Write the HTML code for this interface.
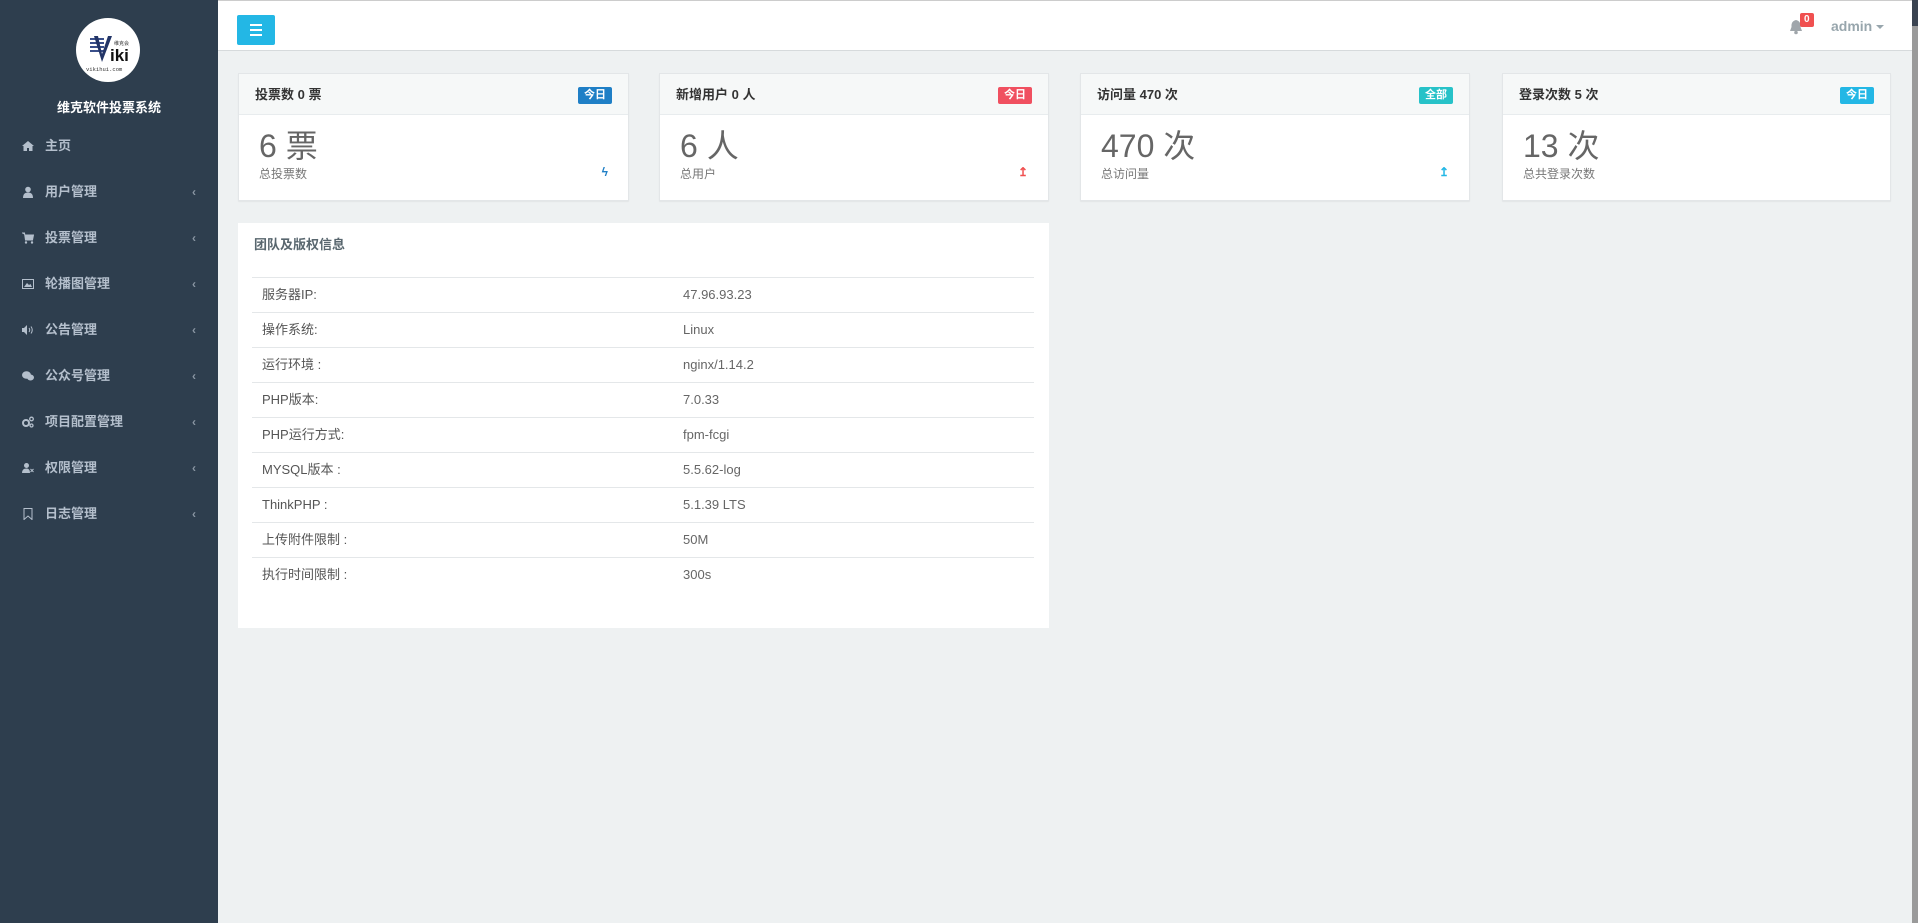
<!DOCTYPE html>
<html><head><meta charset="utf-8">
<style>
*{margin:0;padding:0;box-sizing:border-box}
body{width:1918px;height:923px;overflow:hidden;background:#eef1f2;font-family:"Liberation Sans","Noto Sans CJK SC",sans-serif;position:relative;color:#58666e}
.side{position:absolute;left:0;top:0;width:218px;height:923px;background:#2e3e4e}
.logo{position:absolute;left:76px;top:18px;width:64px;height:64px;border-radius:50%;background:#fff;overflow:hidden}
.brand{position:absolute;left:0;width:218px;top:97px;text-align:center;color:#fff;font-weight:bold;font-size:13px}
.mi{position:absolute;left:0;width:218px;height:30px;line-height:30px;color:#b4bfcc;font-size:13px;font-weight:bold}
.mi .ic{position:absolute;left:22px;top:9px;width:12px;height:12px}
.mi .t{position:absolute;left:45px}
.mi .ch{position:absolute;left:192px;font-size:12px;color:#8a96a3}
.hdr{position:absolute;left:218px;top:0;right:6px;height:51px;background:#fff;border-bottom:1px solid #d6dadc;border-top:1px solid #ccc}
.tog{position:absolute;left:19px;top:14px;width:38px;height:30px;background:#23b7e5;border-radius:2px}
.tog i{position:absolute;left:13px;width:12px;height:2px;background:#fff}
.card{position:absolute;top:73px;height:128px;background:#fff;border:1px solid #e3e6e8;box-shadow:0 1px 1px rgba(0,0,0,.05)}
.card .h{height:41px;background:#f6f8f8;border-bottom:1px solid #e8ecee;padding:0 16px;line-height:41px;font-size:13px;color:#333;position:relative;font-weight:bold}
.card .b{position:absolute;right:16px;top:13px;height:17px;line-height:17px;padding:0 6px;color:#fff;font-size:11px;font-weight:bold;border-radius:2px}
.card .n{position:absolute;left:20px;top:53px;font-size:32px;color:#666;line-height:38px}
.card .s{position:absolute;left:20px;top:91px;font-size:12px;color:#777}
.card .a{position:absolute;right:20px;top:91px;font-size:12px;font-weight:bold}
.info{position:absolute;left:238px;top:223px;width:811px;height:405px;background:#fff}
.info .tt{position:absolute;left:16px;top:11px;font-size:13px;color:#58666e;font-weight:bold}
.row{position:absolute;left:14px;width:782px;height:35px;border-top:1px solid #e4e7e9;font-size:13px;line-height:34px;color:#666}
.row span{position:absolute;left:10px;color:#555}
.row b{position:absolute;left:431px;font-weight:normal}
</style></head><body>
<div class="side">
 <div class="logo">
  <svg width="64" height="64"><g fill="#3a4f8a"><rect x="14" y="20" width="14" height="2"/><rect x="14" y="24" width="14" height="2"/><rect x="14" y="28" width="14" height="2"/><rect x="14" y="32" width="14" height="2"/></g><path d="M18 18 L26 44 L36 18 L32 18 L26 36 L22 18Z" fill="#223466"/><text x="34" y="43" font-size="17" font-weight="bold" fill="#111" font-family="Liberation Sans">iki</text><text x="38" y="27" font-size="5" fill="#333">维克会</text><text x="10" y="53" font-size="5.5" fill="#333" font-family="Liberation Mono">vikihui.com</text></svg>
 </div>
 <div class="brand">维克软件投票系统</div>
 <div class="mi" style="top:131px"><svg class="ic" viewBox="0 0 12 12"><path d="M6 1 L0 6 L1.5 6 L1.5 11 L5 11 L5 8 L7 8 L7 11 L10.5 11 L10.5 6 L12 6Z" fill="#b4bfcc"/></svg><span class="t">主页</span></div>
 <div class="mi" style="top:177px"><svg class="ic" viewBox="0 0 12 12"><circle cx="6" cy="3.5" r="2.8" fill="#b4bfcc"/><path d="M1 12 Q1 6.5 6 6.5 Q11 6.5 11 12Z" fill="#b4bfcc"/></svg><span class="t">用户管理</span><span class="ch">‹</span></div>
 <div class="mi" style="top:223px"><svg class="ic" viewBox="0 0 12 12"><path d="M0 1 H2.5 L3.5 8 H10.5 L11.5 3 H3" fill="#b4bfcc" stroke="#b4bfcc"/><circle cx="4" cy="10.5" r="1.2" fill="#b4bfcc"/><circle cx="10" cy="10.5" r="1.2" fill="#b4bfcc"/></svg><span class="t">投票管理</span><span class="ch">‹</span></div>
 <div class="mi" style="top:269px"><svg class="ic" viewBox="0 0 12 12"><rect x="0.5" y="1.5" width="11" height="9" fill="none" stroke="#b4bfcc"/><path d="M2 9 L5 5 L7 7 L8.5 6 L10 9Z" fill="#b4bfcc"/></svg><span class="t">轮播图管理</span><span class="ch">‹</span></div>
 <div class="mi" style="top:315px"><svg class="ic" viewBox="0 0 12 12"><path d="M0 4 H2 L5 1 V11 L2 8 H0Z" fill="#b4bfcc"/><path d="M7 4 Q8.5 6 7 8 M9 2.5 Q11.5 6 9 9.5" stroke="#b4bfcc" fill="none"/></svg><span class="t">公告管理</span><span class="ch">‹</span></div>
 <div class="mi" style="top:361px"><svg class="ic" viewBox="0 0 12 12"><ellipse cx="4.5" cy="5" rx="4.5" ry="3.8" fill="#b4bfcc"/><ellipse cx="8.5" cy="7.5" rx="3.5" ry="3" fill="#b4bfcc"/></svg><span class="t">公众号管理</span><span class="ch">‹</span></div>
 <div class="mi" style="top:407px"><svg class="ic" viewBox="0 0 12 12"><circle cx="4" cy="7" r="3" fill="none" stroke="#b4bfcc" stroke-width="2"/><circle cx="9.5" cy="3" r="1.8" fill="none" stroke="#b4bfcc" stroke-width="1.3"/><circle cx="9.5" cy="9.5" r="1.5" fill="none" stroke="#b4bfcc" stroke-width="1.3"/></svg><span class="t">项目配置管理</span><span class="ch">‹</span></div>
 <div class="mi" style="top:453px"><svg class="ic" viewBox="0 0 12 12"><circle cx="4.5" cy="3.5" r="2.5" fill="#b4bfcc"/><path d="M0 11 Q0 6.5 4.5 6.5 Q8 6.5 8 11Z" fill="#b4bfcc"/><path d="M8.5 7 L11.5 10 M11.5 7 L8.5 10" stroke="#b4bfcc"/></svg><span class="t">权限管理</span><span class="ch">‹</span></div>
 <div class="mi" style="top:499px"><svg class="ic" viewBox="0 0 12 12"><path d="M2 0.5 H10 V11.5 L6 8 L2 11.5Z" fill="none" stroke="#b4bfcc"/></svg><span class="t">日志管理</span><span class="ch">‹</span></div>
</div>
<div class="hdr">
 <div class="tog"><i style="top:9px"></i><i style="top:14px"></i><i style="top:19px"></i></div>
 <svg style="position:absolute;left:1571px;top:18px" width="14" height="16" viewBox="0 0 14 16"><path d="M7 1 Q2 2 2.5 8 L1 12 H13 L11.5 8 Q12 2 7 1Z" fill="#a0a6ab"/><circle cx="7" cy="13.5" r="1.8" fill="#a0a6ab"/></svg>
 <div style="position:absolute;left:1582px;top:12px;height:14px;padding:0 4px;background:#f05050;color:#fff;font-size:10px;font-weight:bold;line-height:14px;border-radius:2px">0</div>
 <div style="position:absolute;left:1613px;top:17px;font-size:14px;color:#98a6ad;font-weight:bold">admin <span style="display:inline-block;border:4px solid transparent;border-top-color:#98a6ad;vertical-align:middle;margin-top:4px"></span></div>
</div>
<div style="position:absolute;left:1912px;top:0;width:6px;height:923px;background:#9a9a9a"></div>
<div style="position:absolute;left:1912px;top:0;width:6px;height:26px;background:#3a4350"></div>

<div class="card" style="left:238px;width:391px"><div class="h">投票数 0 票<span class="b" style="background:#1f7fc6">今日</span></div><div class="n">6 票</div><div class="s">总投票数</div><div class="a" style="color:#1f7fc6">ϟ</div></div>
<div class="card" style="left:659px;width:390px"><div class="h">新增用户 0 人<span class="b" style="background:#f05060">今日</span></div><div class="n">6 人</div><div class="s">总用户</div><div class="a" style="color:#f05050">↥</div></div>
<div class="card" style="left:1080px;width:390px"><div class="h">访问量 470 次<span class="b" style="background:#27c2c8">全部</span></div><div class="n">470 次</div><div class="s">总访问量</div><div class="a" style="color:#23b7e5">↥</div></div>
<div class="card" style="left:1502px;width:389px"><div class="h">登录次数 5 次<span class="b" style="background:#23b7e5">今日</span></div><div class="n">13 次</div><div class="s">总共登录次数</div></div>

<div class="info">
 <div class="tt">团队及版权信息</div>
 <div class="row" style="top:54px"><span>服务器IP:</span><b>47.96.93.23</b></div>
 <div class="row" style="top:89px"><span>操作系统:</span><b>Linux</b></div>
 <div class="row" style="top:124px"><span>运行环境 :</span><b>nginx/1.14.2</b></div>
 <div class="row" style="top:159px"><span>PHP版本:</span><b>7.0.33</b></div>
 <div class="row" style="top:194px"><span>PHP运行方式:</span><b>fpm-fcgi</b></div>
 <div class="row" style="top:229px"><span>MYSQL版本 :</span><b>5.5.62-log</b></div>
 <div class="row" style="top:264px"><span>ThinkPHP :</span><b>5.1.39 LTS</b></div>
 <div class="row" style="top:299px"><span>上传附件限制 :</span><b>50M</b></div>
 <div class="row" style="top:334px"><span>执行时间限制 :</span><b>300s</b></div>
</div>
</body></html>
